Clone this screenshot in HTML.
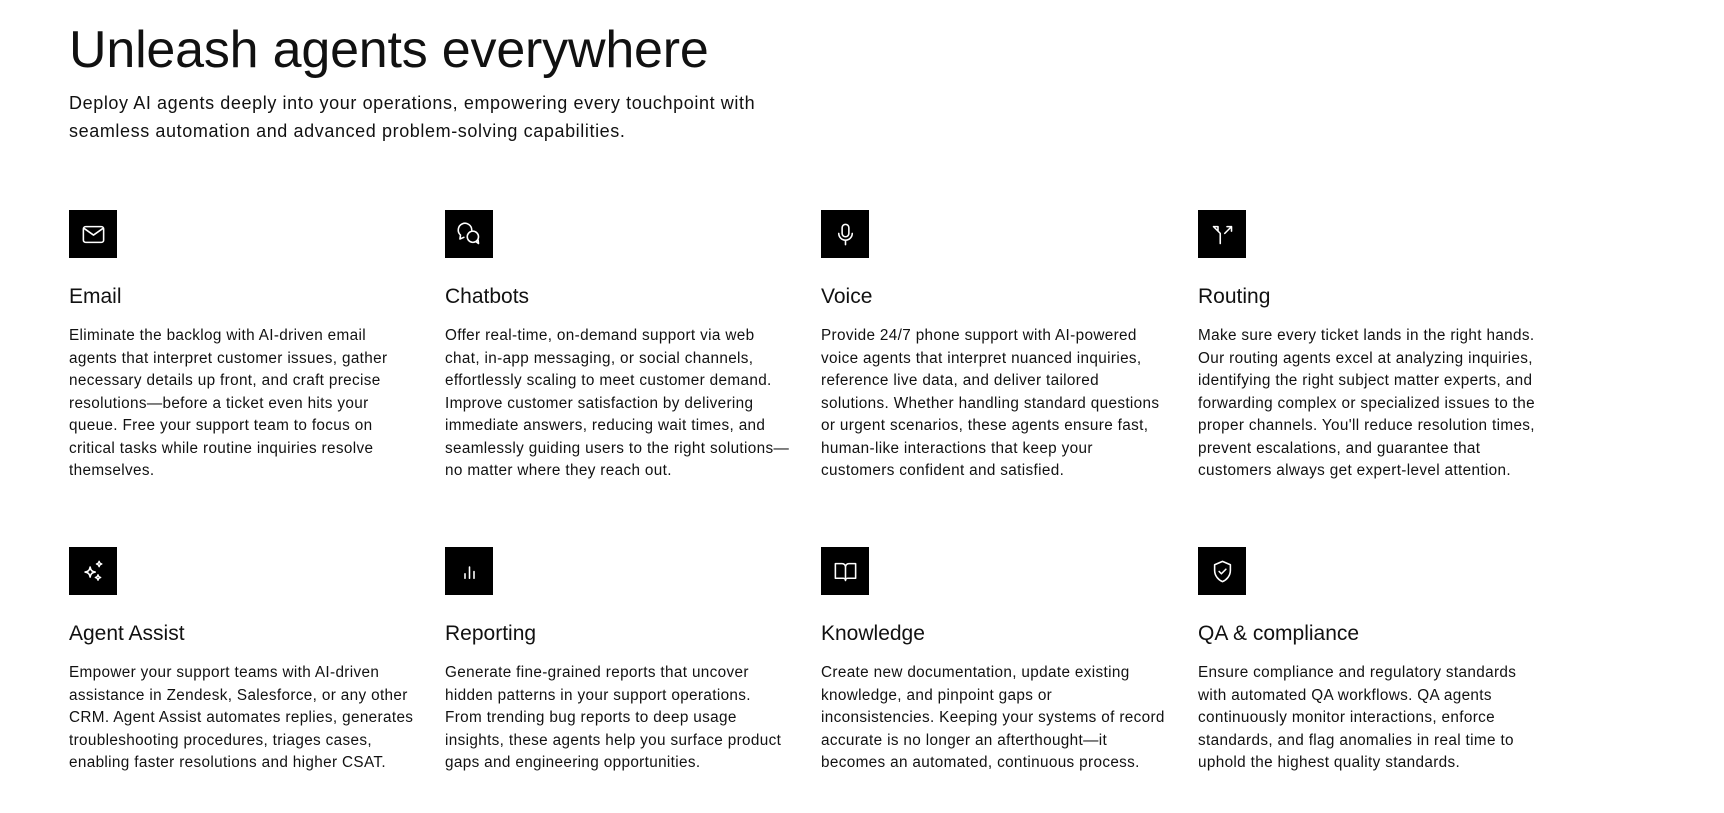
<!DOCTYPE html>
<html><head><meta charset="utf-8"><style>
body{margin:0;background:#fff;color:#111;font-family:"Liberation Sans",sans-serif;width:1724px;height:813px;overflow:hidden;position:relative}
h1{position:absolute;left:69px;top:18px;margin:0;font-weight:400;font-size:52px;letter-spacing:-0.2px;line-height:64px}
.sub{position:absolute;left:69px;top:89px;font-size:18px;letter-spacing:0.6px;line-height:28px;margin:0}
.card{position:absolute;width:360px}
.ic{width:48px;height:48px;background:#000;display:flex;align-items:center;justify-content:center}
.card h3{margin:0;position:absolute;top:74px;font-weight:400;font-size:21px;line-height:26px}
.card p{margin:0;position:absolute;top:115px;font-size:15.3px;letter-spacing:0.35px;line-height:22.5px;white-space:nowrap}
svg{width:27px;height:27px;fill:none;stroke:#fff;stroke-width:1.4;stroke-linecap:round;stroke-linejoin:round}
</style></head><body>
<h1>Unleash agents everywhere</h1>
<p class="sub">Deploy AI agents deeply into your operations, empowering every touchpoint with<br>seamless automation and advanced problem-solving capabilities.</p>

<div class="card" style="left:69px;top:210px"><div class="ic"><svg viewBox="0 0 24 24"><rect x="3" y="5" width="18" height="14" rx="2"/><path d="M3.5 6.5l8.5 6 8.5-6"/></svg></div><h3>Email</h3><p>Eliminate the backlog with AI-driven email<br>agents that interpret customer issues, gather<br>necessary details up front, and craft precise<br>resolutions—before a ticket even hits your<br>queue. Free your support team to focus on<br>critical tasks while routine inquiries resolve<br>themselves.</p></div>

<div class="card" style="left:445px;top:210px"><div class="ic"><svg viewBox="0 0 24 24"><path d="M14 8a6 6 0 1 0-10 4.5L3.5 16l3.5-1.5"/><circle cx="15" cy="14" r="5"/><path d="M18 18.5l2 1.5-.3-3"/></svg></div><h3>Chatbots</h3><p>Offer real-time, on-demand support via web<br>chat, in-app messaging, or social channels,<br>effortlessly scaling to meet customer demand.<br>Improve customer satisfaction by delivering<br>immediate answers, reducing wait times, and<br>seamlessly guiding users to the right solutions—<br>no matter where they reach out.</p></div>

<div class="card" style="left:821px;top:210px"><div class="ic"><svg viewBox="0 0 24 24"><rect x="9" y="3" width="6" height="11" rx="3"/><path d="M6 11a6 6 0 0 0 12 0M12 17v4"/></svg></div><h3>Voice</h3><p>Provide 24/7 phone support with AI-powered<br>voice agents that interpret nuanced inquiries,<br>reference live data, and deliver tailored<br>solutions. Whether handling standard questions<br>or urgent scenarios, these agents ensure fast,<br>human-like interactions that keep your<br>customers confident and satisfied.</p></div>

<div class="card" style="left:1198px;top:210px"><div class="ic"><svg viewBox="0 0 24 24"><path d="M4 5h4v4M4 5l6 6v9M20 5h-4M20 5v4M20 5l-6 6"/></svg></div><h3>Routing</h3><p>Make sure every ticket lands in the right hands.<br>Our routing agents excel at analyzing inquiries,<br>identifying the right subject matter experts, and<br>forwarding complex or specialized issues to the<br>proper channels. You'll reduce resolution times,<br>prevent escalations, and guarantee that<br>customers always get expert-level attention.</p></div>

<div class="card" style="left:69px;top:547px"><div class="ic"><svg viewBox="0 0 24 24"><path d="M9 8c.6 3 1.5 4 4.5 4.5C10.5 13 9.6 14 9 17c-.6-3-1.5-4-4.5-4.5C7.5 12 8.4 11 9 8z"/><path d="M17 3c.3 1.5.8 2 2.3 2.3-1.5.3-2 .8-2.3 2.3-.3-1.5-.8-2-2.3-2.3C16.2 5 16.7 4.5 17 3zM16 15c.3 1.5.8 2 2.3 2.3-1.5.3-2 .8-2.3 2.3-.3-1.5-.8-2-2.3-2.3 1.5-.3 2-.8 2.3-2.3z"/></svg></div><h3>Agent Assist</h3><p>Empower your support teams with AI-driven<br>assistance in Zendesk, Salesforce, or any other<br>CRM. Agent Assist automates replies, generates<br>troubleshooting procedures, triages cases,<br>enabling faster resolutions and higher CSAT.</p></div>

<div class="card" style="left:445px;top:547px"><div class="ic"><svg viewBox="0 0 24 24"><path d="M8 14v4M12 8v10M16 12v6"/></svg></div><h3>Reporting</h3><p>Generate fine-grained reports that uncover<br>hidden patterns in your support operations.<br>From trending bug reports to deep usage<br>insights, these agents help you surface product<br>gaps and engineering opportunities.</p></div>

<div class="card" style="left:821px;top:547px"><div class="ic"><svg viewBox="0 0 24 24"><path d="M3 5h6a3 3 0 0 1 3 3v12a2 2 0 0 0-2-2H3zM21 5h-6a3 3 0 0 0-3 3v12a2 2 0 0 1 2-2h7z"/></svg></div><h3>Knowledge</h3><p>Create new documentation, update existing<br>knowledge, and pinpoint gaps or<br>inconsistencies. Keeping your systems of record<br>accurate is no longer an afterthought—it<br>becomes an automated, continuous process.</p></div>

<div class="card" style="left:1198px;top:547px"><div class="ic"><svg viewBox="0 0 24 24"><path d="M12 3l7 3v5c0 5-3.5 8.5-7 10-3.5-1.5-7-5-7-10V6z"/><path d="M9 12l2 2 4-4"/></svg></div><h3>QA &amp; compliance</h3><p>Ensure compliance and regulatory standards<br>with automated QA workflows. QA agents<br>continuously monitor interactions, enforce<br>standards, and flag anomalies in real time to<br>uphold the highest quality standards.</p></div>
</body></html>
